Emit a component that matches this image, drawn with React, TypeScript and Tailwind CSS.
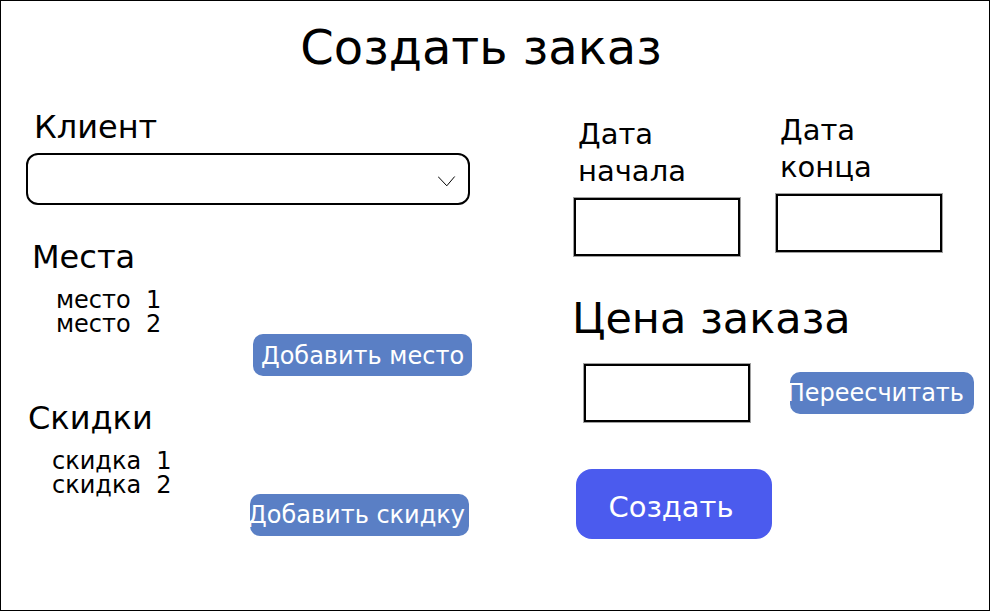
import { useId, type ReactNode } from "react";

const fieldBox =
  "block h-[58px] border-2 border-black bg-white px-3 text-2xl ring-1 ring-neutral-400 outline-none";

function DateField({ label, className }: { label: ReactNode; className: string }) {
  const id = useId();
  return (
    <div className={className}>
      <label htmlFor={id} className="block pl-1 text-[29px] leading-[37px]">
        {label}
      </label>
      <input id={id} type="text" className={`${fieldBox} mt-2 w-full`} />
    </div>
  );
}

function BlueButton({ children, className }: { children: ReactNode; className: string }) {
  return (
    <button
      type="button"
      className={`flex h-[42px] shrink-0 items-center whitespace-nowrap rounded-[10px] bg-[#5a7fc5] text-2xl text-white ${className}`}
    >
      {children}
    </button>
  );
}

export default function App() {
  return (
    <main className="min-h-screen border border-black bg-white pt-[18px] pb-6 font-['DejaVu_Sans',sans-serif] text-black">
      <h1 className="pr-7 text-center text-5xl leading-[56px]">Создать заказ</h1>

      <form className="grid grid-cols-[446fr_402fr] gap-x-[100px] pt-8 pr-[15px] pl-[25px]">
        <div>
          <label htmlFor="client" className="block pl-2 text-[32px] leading-10">
            Клиент
          </label>
          <div className="relative mt-1.5 mr-0.5">
            <select
              id="client"
              className="block h-[52px] w-full appearance-none rounded-xl border-2 border-black bg-white px-4 text-2xl outline-none"
            >
              <option value=""></option>
            </select>
            <svg
              aria-hidden="true"
              viewBox="0 0 18 11"
              className="pointer-events-none absolute top-[23px] right-[14px] h-[11px] w-[18px]"
              fill="none"
              stroke="black"
              strokeWidth="1"
            >
              <path d="M0 0.5 L8.8 9.8 L16.7 0.5" />
            </svg>
          </div>

          <section className="mt-8">
            <h2 className="pl-1.5 text-[32px] leading-10">Места</h2>
            <div className="mt-[11px] flex items-start justify-between pl-[30px]">
              <ul className="whitespace-pre text-2xl leading-6">
                <li>{"место  1"}</li>
                <li>{"место  2"}</li>
              </ul>
              <BlueButton className="mt-[46px] w-[219px] justify-center pt-0.5">Добавить место</BlueButton>
            </div>
          </section>

          <section className="mt-[22px]">
            <h2 className="pl-0.5 text-[32px] leading-10">Скидки</h2>
            <div className="mt-[11px] flex items-start justify-between pr-[3px] pl-[26px]">
              <ul className="whitespace-pre text-2xl leading-6">
                <li>{"скидка  1"}</li>
                <li>{"скидка  2"}</li>
              </ul>
              <BlueButton className="mt-[45px] w-[219px] justify-end pr-1">Добавить скидку</BlueButton>
            </div>
          </section>
        </div>

        <div>
          <div className="grid grid-cols-2 items-start gap-x-9 pt-[5px] pr-8 pl-0.5">
            <DateField className="pt-1" label={<>Дата<br />начала</>} />
            <DateField className="" label={<>Дата<br />конца</>} />
          </div>

          <label htmlFor="price" className="mt-9 block text-[43px] leading-[52px]">
            Цена заказа
          </label>
          <div className="mt-5 flex items-center justify-between pl-3">
            <input id="price" type="text" className={`${fieldBox} w-[166px]`} />
            <BlueButton className="w-[184px] justify-end pr-2.5">Переесчитать</BlueButton>
          </div>

          <button
            type="submit"
            className="mt-[47px] ml-1 h-[70px] w-[196px] rounded-2xl bg-[#4b5bee] pt-2 pr-1.5 text-[29px] text-white"
          >
            Создать
          </button>
        </div>
      </form>
    </main>
  );
}
